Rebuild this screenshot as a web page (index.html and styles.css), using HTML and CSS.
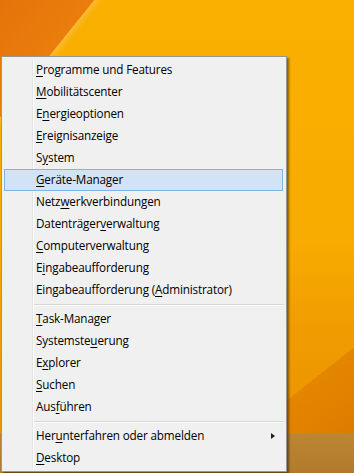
FILE: index.html
```html
<!DOCTYPE html>
<html lang="de">
<head>
<meta charset="utf-8">
<title>Win+X Menü</title>
<link rel="stylesheet" href="styles.css">
</head>
<body>
<div class="desktop">
  <div class="menu">
    <div class="item"><span class="label"><u>P</u>rogramme und Features</span></div>
    <div class="item"><span class="label"><u>M</u>obilitätscenter</span></div>
    <div class="item"><span class="label">E<u>n</u>ergieoptionen</span></div>
    <div class="item"><span class="label"><u>E</u>reignisanzeige</span></div>
    <div class="item"><span class="label">S<u>y</u>stem</span></div>
    <div class="item active"><span class="label"><u>G</u>eräte-Manager</span></div>
    <div class="item"><span class="label">Netz<u>w</u>erkverbindungen</span></div>
    <div class="item"><span class="label">Datenträger<u>v</u>erwaltung</span></div>
    <div class="item"><span class="label"><u>C</u>omputerverwaltung</span></div>
    <div class="item"><span class="label">E<u>i</u>ngabeaufforderung</span></div>
    <div class="item"><span class="label">Eingabeaufforderung (<u>A</u>dministrator)</span></div>
    <div class="sep"></div>
    <div class="item"><span class="label"><u>T</u>ask-Manager</span></div>
    <div class="item"><span class="label">Systemste<u>u</u>erung</span></div>
    <div class="item"><span class="label">E<u>x</u>plorer</span></div>
    <div class="item"><span class="label"><u>S</u>uchen</span></div>
    <div class="item"><span class="label">Aus<u>f</u>ühren</span></div>
    <div class="sep"></div>
    <div class="item submenu"><span class="label">Her<u>u</u>nterfahren oder abmelden</span><span class="arrow"></span></div>
    <div class="item"><span class="label"><u>D</u>esktop</span></div>
  </div>
</div>
</body>
</html>
```
FILE: styles.css
```css
html, body {
  margin: 0;
  padding: 0;
}

body {
  width: 354px;
  height: 473px;
  overflow: hidden;
  font-family: "Open Sans", "Liberation Sans", sans-serif;
}

.desktop {
  box-sizing: border-box;
  width: 354px;
  height: 473px;
  padding: 56px 0 0 1px;
  background:
    linear-gradient(to bottom, transparent 433px, #bd8633 433px, #b27b2b 473px),
    linear-gradient(141.7deg, transparent 492px, #e48600 492px, #dc7c00 560px),
    linear-gradient(128.8deg, #e5730a 0px, #ea7d0c 73px, #f9bb38 74px, #f9b418 77px, transparent 82px),
    linear-gradient(to bottom, #f9b000 0px, #f8ab00 240px, #f09c00 330px, #ec9300 433px);
}

.menu {
  box-sizing: border-box;
  width: 286px;
  height: 416px;
  padding: 2px 2px 1px 2px;
  background: #f0f0f0;
  border: 1px solid #979797;
  box-shadow: 2px 2px 2px rgba(0, 0, 0, 0.45);
  position: relative;
}

.menu::before {
  content: "";
  position: absolute;
  left: 30px;
  top: 2px;
  bottom: 2px;
  width: 1px;
  background: #e2e3e3;
  border-right: 1px solid #ffffff;
}

.item {
  box-sizing: border-box;
  height: 22px;
  display: flex;
  align-items: center;
  justify-content: space-between;
  padding: 0 7px 0 32px;
  font-size: 11.7px;
  letter-spacing: -0.15px;
  color: #000000;
  position: relative;
  border: 1px solid transparent;
  margin-right: 1px;
}

.item .label {
  white-space: nowrap;
  position: relative;
  top: -1px;
  margin-left: -1px;
}

.item u {
  text-decoration: underline;
  text-underline-offset: 2px;
}

.item.active {
  background: #d1e3f4;
  border-color: #80b5e8;
  z-index: 1;
}

.sep {
  height: 7px;
  display: flex;
  align-items: center;
  padding-left: 28px;
}

.sep::after {
  content: "";
  flex: 1;
  height: 1px;
  background: #d7d7d7;
  border-bottom: 1px solid #fcfcfc;
  margin-top: 1px;
}

.arrow {
  width: 0;
  height: 0;
  border-top: 3.5px solid transparent;
  border-bottom: 3.5px solid transparent;
  border-left: 4px solid #202020;
}
```
